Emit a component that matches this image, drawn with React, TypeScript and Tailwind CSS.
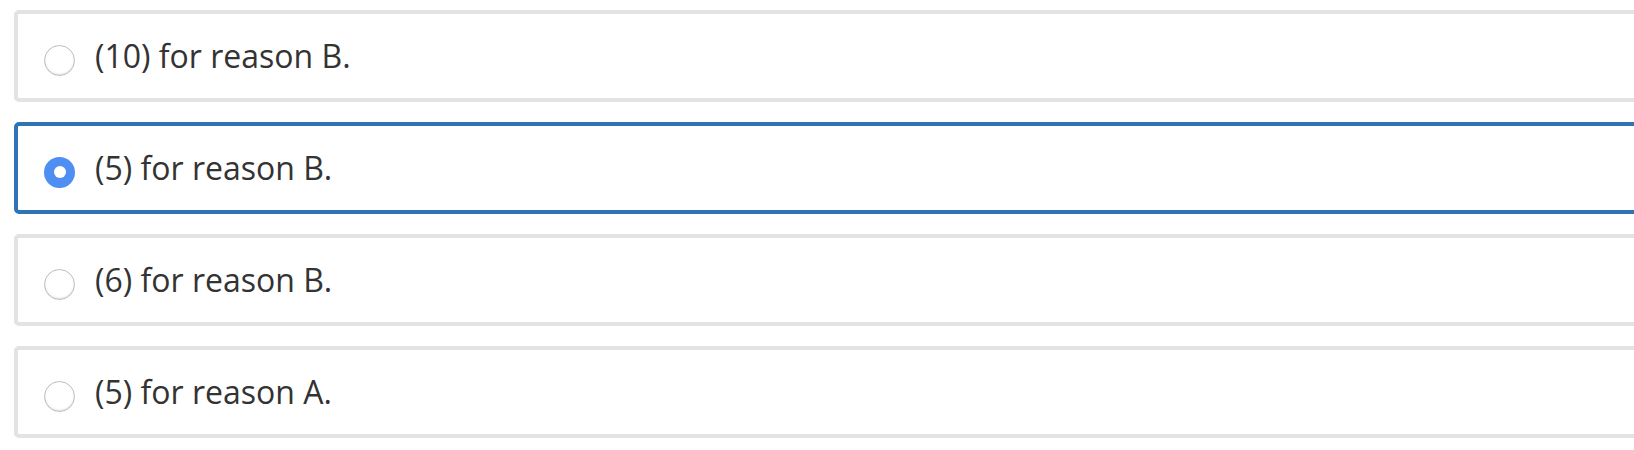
import { useState } from 'react'

const options = [
  '(10) for reason B.',
  '(5) for reason B.',
  '(6) for reason B.',
  '(5) for reason A.',
]

export default function App() {
  const [selected, setSelected] = useState(1)

  return (
    <div className="w-full h-[450px] overflow-hidden bg-white">
      <div className="w-[1640px] ml-[14px] pt-[10px] flex flex-col gap-[20px]">
        {options.map((label, i) => {
          const active = i === selected
          return (
            <label
              key={i}
              onClick={() => setSelected(i)}
              className={
                active
                  ? 'h-[92px] flex items-center rounded-[5px] border-4 border-[#2f74b5] bg-white pl-[26px] pt-[8px] cursor-pointer'
                  : 'h-[92px] flex items-center rounded-[5px] border-4 border-[#e3e3e3] bg-white pl-[26px] pt-[8px] cursor-pointer'
              }
            >
              {active ? (
                <span className="w-[31px] h-[31px] rounded-full bg-[#4f8ef2] flex items-center justify-center shrink-0">
                  <span className="w-[12px] h-[12px] rounded-full bg-white" />
                </span>
              ) : (
                <span className="w-[31px] h-[31px] rounded-full border border-[#bdbdbd] bg-white shadow-[inset_0_-1px_2px_rgba(0,0,0,0.12)] shrink-0" />
              )}
              <span className="ml-[20px] text-[32px] leading-none text-[#333] font-['Open_Sans',sans-serif] -mt-[8px]">
                {label}
              </span>
            </label>
          )
        })}
      </div>
    </div>
  )
}
